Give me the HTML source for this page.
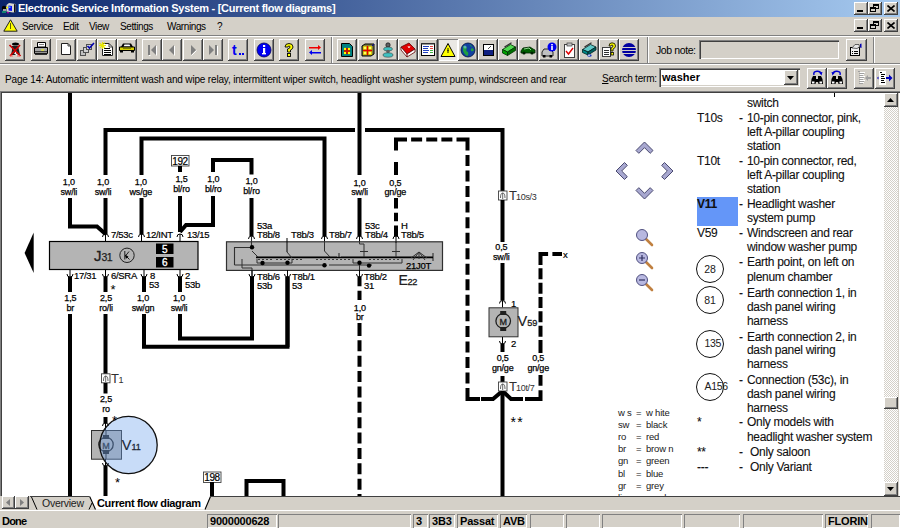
<!DOCTYPE html>
<html><head><meta charset="utf-8">
<style>
*{margin:0;padding:0;box-sizing:border-box}
html,body{width:900px;height:528px;overflow:hidden;-webkit-font-smoothing:antialiased;background:#D4D0C8;font-family:"Liberation Sans",sans-serif;color:#000}
.a{position:absolute}
#title{left:0;top:0;width:900px;height:17px;background:linear-gradient(to right,#0A246A,#A6CAF0)}
#title .t{left:18px;top:2px;color:#fff;font-weight:bold;font-size:11px;letter-spacing:-0.28px;white-space:nowrap}
.cb{width:14px;height:13px;background:#D4D0C8;box-shadow:inset -1px -1px #404040,inset 1px 1px #fff,inset -2px -2px #808080}
.menu{top:21px;font-size:10px;white-space:nowrap;letter-spacing:-0.4px}
.btn{width:20px;height:22px;background:#D4D0C8;box-shadow:inset -1px -1px #404040,inset 1px 1px #fff,inset -2px -2px #808080}
.btn svg{position:absolute;left:2px;top:3px}
.sunk{box-shadow:inset 1px 1px #808080,inset -1px -1px #fff}
.hl{left:0;width:900px;height:1px}
.sp{top:78px;font-size:10px;white-space:nowrap}
.lg{font-size:12px;white-space:nowrap;letter-spacing:-0.3px;color:#101010;-webkit-text-stroke:0.1px #101010}
.st{top:514px;height:14px;box-shadow:inset 1px 1px #808080,inset -1px -1px #fff;font-size:11px;font-weight:bold;padding:1px 0 0 3px;white-space:nowrap;letter-spacing:-0.2px}
</style></head><body>

<!-- title bar -->
<div id="title" class="a">
  <svg class="a" style="left:0;top:0" width="17" height="16" viewBox="0 0 17 16">
    <path d="M6.5 5 L9 3 L15.5 4 L15.5 12 L13 12.5 L6.5 11.5Z" fill="#D8D8D0"/>
    <path d="M14 4 L15.5 4.5 L15.5 12 L14 12.5Z" fill="#101010"/>
    <path d="M8.5 5.5 L12 6 L12 11 L8.5 10.5Z" fill="#1010F0"/>
    <rect x="9" y="6.5" width="1.5" height="1.5" fill="#40C0FF"/>
    <circle cx="4" cy="8" r="2.2" fill="#000"/>
    <rect x="3" y="9" width="3" height="2.5" fill="#A0A0A0"/>
    <rect x="6" y="6.8" width="2" height="1.5" fill="#F0F000"/>
    <rect x="2" y="11" width="4" height="2" fill="#108070"/>
    <rect x="7" y="12" width="2" height="1.3" fill="#A000A0"/>
  </svg>
  <div class="a t">Electronic Service Information System - [Current flow diagrams]</div>
  <div class="a cb" style="left:854px;top:2px"><div class="a" style="left:3px;top:8px;width:6px;height:2px;background:#000"></div></div>
  <div class="a cb" style="left:868px;top:2px"><div class="a" style="left:5px;top:2px;width:6px;height:5px;border:1px solid #000;border-top-width:2px"></div><div class="a" style="left:2px;top:5px;width:6px;height:5px;border:1px solid #000;border-top-width:2px;background:#D4D0C8"></div></div>
  <div class="a cb" style="left:884px;top:2px"><svg class="a" style="left:3px;top:3px" width="8" height="7"><path d="M0.5 0.5 L7.5 6.5 M7.5 0.5 L0.5 6.5" stroke="#000" stroke-width="1.6"/></svg></div>
</div>

<!-- menu bar -->
<svg class="a" style="left:3px;top:19px" width="15" height="13" viewBox="0 0 15 13"><path d="M7.5 0.8 L14.2 12.2 L0.8 12.2 Z" fill="#FFFF00" stroke="#202020" stroke-width="1"/><path d="M7 4 L8 4 L8 10 L7 10Z" fill="#606000"/></svg>
<div class="a menu" style="left:22px">Service</div>
<div class="a menu" style="left:63px">Edit</div>
<div class="a menu" style="left:89px">View</div>
<div class="a menu" style="left:120px">Settings</div>
<div class="a menu" style="left:167px">Warnings</div>
<div class="a menu" style="left:217px">?</div>
<div class="a cb" style="left:854px;top:19px"><div class="a" style="left:3px;top:8px;width:6px;height:2px;background:#000"></div></div>
<div class="a cb" style="left:868px;top:19px"><div class="a" style="left:5px;top:2px;width:6px;height:5px;border:1px solid #000;border-top-width:2px"></div><div class="a" style="left:2px;top:5px;width:6px;height:5px;border:1px solid #000;border-top-width:2px;background:#D4D0C8"></div></div>
<div class="a cb" style="left:884px;top:19px"><svg class="a" style="left:3px;top:3px" width="8" height="7"><path d="M0.5 0.5 L7.5 6.5 M7.5 0.5 L0.5 6.5" stroke="#000" stroke-width="1.6"/></svg></div>

<div class="a hl" style="top:35px;background:#808080"></div>
<div class="a hl" style="top:36px;background:#fff"></div>

<!-- TOOLBAR -->
<div class="a" style="left:5px;top:39px;width:20px;height:22px;background:#D4D0C8;box-shadow:inset -1px -1px #404040,inset 1px 1px #fff,inset -2px -2px #808080"><svg class="a" style="left:2px;top:3px" width="16" height="16" viewBox="0 0 16 16"><ellipse cx="8.5" cy="2" rx="3.5" ry="1.6" fill="#000"/><path d="M5 4 L11 4 L12 8 L13 13 L4 13 L5 8Z" fill="#202020"/><path d="M8 7 L10 10 L8 12" fill="#fff"/><path d="M7.5 11 L10.5 13" stroke="#fff" stroke-width="1.5"/><path d="M2.5 3 L13.5 14 M13 3 L3 14" stroke="#D00000" stroke-width="1.7"/><path d="M3 14 L6 14 M10 14 L13 14" stroke="#FF6060" stroke-width="1"/></svg></div>
<div class="a" style="left:31px;top:39px;width:20px;height:22px;background:#D4D0C8;box-shadow:inset -1px -1px #404040,inset 1px 1px #fff,inset -2px -2px #808080"><svg class="a" style="left:2px;top:3px" width="16" height="16" viewBox="0 0 16 16"><path d="M4.5 0.5 L12.5 0.5 L12.5 5 L4.5 5Z" fill="#fff" stroke="#000" stroke-width="1"/><path d="M6 2.5 H11" stroke="#808080"/><path d="M1.5 5.5 H14.5 V11.5 H1.5Z" fill="#A8A8A8" stroke="#000"/><rect x="2" y="9" width="12" height="1.2" fill="#404040"/><rect x="8" y="7.5" width="3" height="1" fill="#FFFF00"/><rect x="2" y="11.5" width="12" height="1.5" fill="#303030"/></svg></div>
<div class="a" style="left:56px;top:39px;width:20px;height:22px;background:#D4D0C8;box-shadow:inset -1px -1px #404040,inset 1px 1px #fff,inset -2px -2px #808080"><svg class="a" style="left:2px;top:3px" width="16" height="16" viewBox="0 0 16 16"><path d="M3.5 1.5 L10 1.5 L12.5 4 L12.5 12.5 L3.5 12.5Z" fill="#fff" stroke="#202020"/><path d="M10 1.5 L10 4 L12.5 4" fill="none" stroke="#404040"/></svg></div>
<div class="a" style="left:77px;top:39px;width:20px;height:22px;background:#D4D0C8;box-shadow:inset -1px -1px #404040,inset 1px 1px #fff,inset -2px -2px #808080"><svg class="a" style="left:2px;top:3px" width="16" height="16" viewBox="0 0 16 16"><rect x="1.5" y="8.5" width="5" height="5" fill="#C0C0C0" stroke="#505050"/><rect x="4.5" y="5.5" width="5" height="5" fill="#D0D0D0" stroke="#505050"/><rect x="7.5" y="2.5" width="5" height="5" fill="#D8D8D8" stroke="#505050"/><path d="M8.5 4 L10.5 6 L15 1" fill="none" stroke="#0000B0" stroke-width="1.6"/></svg></div>
<div class="a" style="left:97px;top:39px;width:20px;height:22px;background:#D4D0C8;box-shadow:inset -1px -1px #404040,inset 1px 1px #fff,inset -2px -2px #808080"><svg class="a" style="left:2px;top:3px" width="16" height="16" viewBox="0 0 16 16"><path d="M3.5 1.5 L10 1.5 L13.5 5 L13.5 13.5 L3.5 13.5Z" fill="#fff" stroke="#202020"/><path d="M10 1.5 V5 H13.5" fill="none" stroke="#404040"/><path d="M5 6.5h6M5 8.5h7M5 10.5h7M5 12.5h7" stroke="#000" stroke-width="1"/><path d="M0.5 1 L6 6 M6 0.5 L1 6 M3.5 0 V7 M0 3.5 H7" stroke="#E8E800" stroke-width="1.1"/></svg></div>
<div class="a" style="left:117px;top:39px;width:20px;height:22px;background:#D4D0C8;box-shadow:inset -1px -1px #404040,inset 1px 1px #fff,inset -2px -2px #808080"><svg class="a" style="left:2px;top:3px" width="16" height="16" viewBox="0 0 16 16"><path d="M2 5 L4 1.5 L12 1.5 L14 5Z" fill="#000"/><path d="M4.5 4.5 L5.5 2.5 L10.5 2.5 L11.5 4.5Z" fill="#fff"/><path d="M0.5 5 L15.5 5 L15.5 8.5 L0.5 8.5Z" fill="#D8D000" stroke="#000" stroke-width="1"/><rect x="1" y="8" width="3" height="2.5" fill="#000"/><rect x="12" y="8" width="3" height="2.5" fill="#000"/><rect x="4" y="6" width="8" height="1" fill="#808000"/></svg></div>
<div class="a" style="left:142px;top:39px;width:20px;height:22px;background:#D4D0C8;box-shadow:inset -1px -1px #404040,inset 1px 1px #fff,inset -2px -2px #808080"><svg class="a" style="left:2px;top:3px" width="16" height="16" viewBox="0 0 16 16"><rect x="4" y="3" width="2" height="10" fill="#808080"/><path d="M12 3 L7 8 L12 13Z" fill="#808080"/><path d="M12.5 4 L12.5 13.5 M5 13.5 L6.5 13.5" stroke="#fff"/></svg></div>
<div class="a" style="left:162px;top:39px;width:20px;height:22px;background:#D4D0C8;box-shadow:inset -1px -1px #404040,inset 1px 1px #fff,inset -2px -2px #808080"><svg class="a" style="left:2px;top:3px" width="16" height="16" viewBox="0 0 16 16"><path d="M10 3 L5 8 L10 13Z" fill="#808080"/><path d="M10.5 4 L10.5 13.5" stroke="#fff"/></svg></div>
<div class="a" style="left:183px;top:39px;width:20px;height:22px;background:#D4D0C8;box-shadow:inset -1px -1px #404040,inset 1px 1px #fff,inset -2px -2px #808080"><svg class="a" style="left:2px;top:3px" width="16" height="16" viewBox="0 0 16 16"><path d="M6 3 L11 8 L6 13Z" fill="#808080"/><path d="M6.5 13.5 L11.5 8.5" stroke="#fff"/></svg></div>
<div class="a" style="left:203px;top:39px;width:20px;height:22px;background:#D4D0C8;box-shadow:inset -1px -1px #404040,inset 1px 1px #fff,inset -2px -2px #808080"><svg class="a" style="left:2px;top:3px" width="16" height="16" viewBox="0 0 16 16"><path d="M4 3 L9 8 L4 13Z" fill="#808080"/><rect x="10" y="3" width="2" height="10" fill="#808080"/><path d="M12.5 4 L12.5 13.5" stroke="#fff"/></svg></div>
<div class="a" style="left:228px;top:39px;width:20px;height:22px;background:#D4D0C8;box-shadow:inset -1px -1px #404040,inset 1px 1px #fff,inset -2px -2px #808080"><svg class="a" style="left:2px;top:3px" width="16" height="16" viewBox="0 0 16 16"><text x="2" y="13" font-family="Liberation Sans" font-weight="bold" font-size="14" fill="#0000F0">t</text><rect x="9" y="11" width="2" height="2" fill="#0000F0"/><rect x="12" y="11" width="2" height="2" fill="#0000F0"/></svg></div>
<div class="a" style="left:254px;top:39px;width:20px;height:22px;background:#D4D0C8;box-shadow:inset -1px -1px #404040,inset 1px 1px #fff,inset -2px -2px #808080"><svg class="a" style="left:2px;top:3px" width="16" height="16" viewBox="0 0 16 16"><circle cx="8" cy="8" r="7" fill="#0000F0" stroke="#000060" stroke-width="0.8"/><rect x="7" y="3" width="2.2" height="2" fill="#fff"/><rect x="7" y="6" width="2.2" height="6" fill="#fff"/><rect x="6" y="11" width="4" height="1.4" fill="#fff"/></svg></div>
<div class="a" style="left:279px;top:39px;width:20px;height:22px;background:#D4D0C8;box-shadow:inset -1px -1px #404040,inset 1px 1px #fff,inset -2px -2px #808080"><svg class="a" style="left:2px;top:3px" width="16" height="16" viewBox="0 0 16 16"><path d="M4 5 Q4 1.5 8 1.5 Q12 1.5 12 5 Q12 7 9.5 8 L9.5 10 L6.5 10 L6.5 7 Q9 6.5 9 5 Q9 4 8 4 Q7 4 7 5Z" fill="#FFFF00" stroke="#000" stroke-width="0.9"/><rect x="6.5" y="11.5" width="3" height="3" fill="#FFFF00" stroke="#000" stroke-width="0.9"/></svg></div>
<div class="a" style="left:305px;top:39px;width:20px;height:22px;background:#D4D0C8;box-shadow:inset -1px -1px #404040,inset 1px 1px #fff,inset -2px -2px #808080"><svg class="a" style="left:2px;top:3px" width="16" height="16" viewBox="0 0 16 16"><path d="M2 5 L11 5 L11 3 L14 5.5 L11 8 L11 6.5 L2 6.5Z" fill="#F00000"/><path d="M14 10 L5 10 L5 8 L2 10.5 L5 13 L5 11.5 L14 11.5Z" fill="#0000F0"/></svg></div>
<div class="a" style="left:337px;top:39px;width:20px;height:22px;background:#D4D0C8;box-shadow:inset -1px -1px #404040,inset 1px 1px #fff,inset -2px -2px #808080"><svg class="a" style="left:2px;top:3px" width="16" height="16" viewBox="0 0 16 16"><path d="M2.5 1.5 L10.5 1.5 L13.5 4.5 L13.5 14.5 L2.5 14.5Z" fill="#008080" stroke="#000"/><rect x="5" y="6" width="6" height="6" fill="#804000"/><circle cx="6" cy="7" r="1.2" fill="#FFFF00"/><circle cx="10" cy="7" r="1.2" fill="#FFFF00"/><circle cx="6" cy="11" r="1.2" fill="#FFFF00"/><circle cx="10" cy="11" r="1.2" fill="#FFFF00"/><path d="M8 6 V12 M5 9 H11" stroke="#E00000" stroke-width="1.2"/></svg></div>
<div class="a" style="left:358px;top:39px;width:20px;height:22px;background:#D4D0C8;box-shadow:inset -1px -1px #404040,inset 1px 1px #fff,inset -2px -2px #808080"><svg class="a" style="left:2px;top:3px" width="16" height="16" viewBox="0 0 16 16"><path d="M2 4 L5 2 L14 2 L14 12 L11 14 L2 14Z" fill="#808040" stroke="#000"/><rect x="3" y="4" width="9" height="9" fill="#D0C000"/><path d="M7.5 4 V13 M3 8.5 H12" stroke="#E00000" stroke-width="1.4"/><circle cx="5" cy="6" r="1.3" fill="#FFFF60"/><circle cx="10" cy="6" r="1.3" fill="#FFFF60"/><circle cx="5" cy="11" r="1.3" fill="#FFFF60"/><circle cx="10" cy="11" r="1.3" fill="#FFFF60"/><path d="M12 4 L14 2" stroke="#0000A0"/></svg></div>
<div class="a" style="left:378px;top:39px;width:20px;height:22px;background:#D4D0C8;box-shadow:inset -1px -1px #404040,inset 1px 1px #fff,inset -2px -2px #808080"><svg class="a" style="left:2px;top:3px" width="16" height="16" viewBox="0 0 16 16"><circle cx="8" cy="3" r="2.2" fill="#606060" stroke="#000" stroke-width="0.6"/><ellipse cx="8" cy="7" rx="4.5" ry="2" fill="#40C0C0" stroke="#404040" stroke-width="0.6"/><circle cx="8" cy="9.5" r="1.8" fill="#606060"/><ellipse cx="8" cy="13" rx="5" ry="2.2" fill="#40C0C0" stroke="#404040" stroke-width="0.6"/></svg></div>
<div class="a" style="left:398px;top:39px;width:20px;height:22px;background:#D4D0C8;box-shadow:inset -1px -1px #404040,inset 1px 1px #fff,inset -2px -2px #808080"><svg class="a" style="left:2px;top:3px" width="16" height="16" viewBox="0 0 16 16"><path d="M1 5 L9 1 L15 7 L7 12Z" fill="#E00000" stroke="#600000" stroke-width="0.8"/><path d="M1 5 L1 8 L7 15 L15 10 L15 7 L7 12Z" fill="#fff" stroke="#600000" stroke-width="0.8"/><path d="M7 12 L7 15" stroke="#600000"/><path d="M8 4 L9 6 L10 4" stroke="#fff" fill="none" stroke-width="0.8"/></svg></div>
<div class="a" style="left:418px;top:39px;width:20px;height:22px;background:#D4D0C8;box-shadow:inset -1px -1px #404040,inset 1px 1px #fff,inset -2px -2px #808080"><svg class="a" style="left:2px;top:3px" width="16" height="16" viewBox="0 0 16 16"><rect x="1.5" y="1.5" width="13" height="12" fill="#fff" stroke="#000"/><rect x="1" y="1" width="14" height="1.5" fill="#303030"/><path d="M3 4.5h6M3 6.5h5M3 8.5h6M3 10.5h5" stroke="#2040C0" stroke-width="1"/><path d="M10 4.5h3M10 6.5h3" stroke="#E04040" stroke-width="1"/><path d="M10 8.5h3M10 10.5h3" stroke="#40B040" stroke-width="1"/></svg></div>
<div class="a" style="left:438px;top:39px;width:20px;height:22px;background:#EAE8E4;box-shadow:inset 1px 1px #808080,inset -1px -1px #fff"><svg class="a" style="left:2px;top:3px" width="16" height="16" viewBox="0 0 16 16"><path d="M8 1.5 L15 14.5 L1 14.5Z" fill="#FFFF00" stroke="#000" stroke-width="1"/><path d="M8 6 L8 11 M7 8.5 L9 8.5" stroke="#404000" stroke-width="1.2"/></svg></div>
<div class="a" style="left:458px;top:39px;width:20px;height:22px;background:#D4D0C8;box-shadow:inset -1px -1px #404040,inset 1px 1px #fff,inset -2px -2px #808080"><svg class="a" style="left:2px;top:3px" width="16" height="16" viewBox="0 0 16 16"><circle cx="8" cy="8" r="7" fill="#1040A0" stroke="#001040" stroke-width="0.8"/><path d="M3 4 Q6 3 7 6 Q5 9 8 10 Q9 13 7 14 Q4 12 3 9Z" fill="#20A040"/><path d="M9 2 Q12 3 12 6 Q10 7 11 9 Q13 10 14 8" fill="#20A040"/><circle cx="5" cy="5" r="1.5" fill="#80C0FF" opacity="0.6"/></svg></div>
<div class="a" style="left:478px;top:39px;width:20px;height:22px;background:#D4D0C8;box-shadow:inset -1px -1px #404040,inset 1px 1px #fff,inset -2px -2px #808080"><svg class="a" style="left:2px;top:3px" width="16" height="16" viewBox="0 0 16 16"><rect x="3.5" y="2.5" width="10" height="11" fill="#fff" stroke="#000"/><rect x="4" y="8" width="9" height="5" fill="#102080"/><path d="M8 7 L11 4" stroke="#404040" stroke-width="0.9"/></svg></div>
<div class="a" style="left:498px;top:39px;width:20px;height:22px;background:#D4D0C8;box-shadow:inset -1px -1px #404040,inset 1px 1px #fff,inset -2px -2px #808080"><svg class="a" style="left:2px;top:3px" width="16" height="16" viewBox="0 0 16 16"><path d="M2.5 7.5 L10.5 2.5 L15.5 5 L7.5 10Z" fill="#50D850" stroke="#003000" stroke-width="0.8"/><path d="M2.5 7.5 L7.5 10 L7.5 13.5 L2.5 11Z" fill="#00A000" stroke="#003000" stroke-width="0.8"/><path d="M7.5 10 L15.5 5 L15.5 8.5 L7.5 13.5Z" fill="#007000" stroke="#003000" stroke-width="0.8"/><path d="M4.5 5 L11.5 0.8" stroke="#303030" stroke-width="1.3"/></svg></div>
<div class="a" style="left:518px;top:39px;width:20px;height:22px;background:#D4D0C8;box-shadow:inset -1px -1px #404040,inset 1px 1px #fff,inset -2px -2px #808080"><svg class="a" style="left:2px;top:3px" width="16" height="16" viewBox="0 0 16 16"><path d="M1 9 L3 6 L10 5 L13 7 L15 8 L15 11 L1 11Z" fill="#006000" stroke="#002000" stroke-width="0.8"/><path d="M4 7 L9 6 L11 8" stroke="#90D090" fill="none"/><circle cx="4" cy="11" r="1.6" fill="#002000"/><circle cx="12" cy="11" r="1.6" fill="#002000"/></svg></div>
<div class="a" style="left:539px;top:39px;width:20px;height:22px;background:#D4D0C8;box-shadow:inset -1px -1px #404040,inset 1px 1px #fff,inset -2px -2px #808080"><svg class="a" style="left:2px;top:3px" width="16" height="16" viewBox="0 0 16 16"><path d="M1 10 L3 7 L9 7 L12 10 L12 14 L1 14Z" fill="#C0C0C0" stroke="#000" stroke-width="0.8"/><rect x="2" y="13" width="2.5" height="2.5" fill="#000"/><rect x="8.5" y="13" width="2.5" height="2.5" fill="#000"/><circle cx="11" cy="5" r="4.5" fill="#0000F0"/><rect x="10.2" y="2" width="1.6" height="1.4" fill="#fff"/><rect x="10.2" y="4" width="1.6" height="4" fill="#fff"/></svg></div>
<div class="a" style="left:559px;top:39px;width:20px;height:22px;background:#D4D0C8;box-shadow:inset -1px -1px #404040,inset 1px 1px #fff,inset -2px -2px #808080"><svg class="a" style="left:2px;top:3px" width="16" height="16" viewBox="0 0 16 16"><rect x="3.5" y="2.5" width="10" height="13" fill="#fff" stroke="#404040"/><rect x="6" y="1" width="5" height="3" fill="#C0C0C0" stroke="#404040" stroke-width="0.7"/><path d="M5 9 L7.5 12 L12 6" fill="none" stroke="#E00000" stroke-width="1.4"/></svg></div>
<div class="a" style="left:579px;top:39px;width:20px;height:22px;background:#D4D0C8;box-shadow:inset -1px -1px #404040,inset 1px 1px #fff,inset -2px -2px #808080"><svg class="a" style="left:2px;top:3px" width="16" height="16" viewBox="0 0 16 16"><path d="M1.5 7.5 L9.5 2.5 L15 5 L7 10Z" fill="#60C8C8" stroke="#002020" stroke-width="0.8"/><path d="M1.5 7.5 L7 10 L7 13 L1.5 10.5Z" fill="#008888" stroke="#002020" stroke-width="0.8"/><path d="M7 10 L15 5 L15 8 L7 13Z" fill="#006060" stroke="#002020" stroke-width="0.8"/><path d="M3.5 5 L10.5 0.8" stroke="#303030" stroke-width="1.3"/><ellipse cx="8.5" cy="13.5" rx="2.2" ry="1.3" fill="#2040C0"/><ellipse cx="8" cy="13.2" rx="1" ry="0.6" fill="#fff"/></svg></div>
<div class="a" style="left:599px;top:39px;width:20px;height:22px;background:#D4D0C8;box-shadow:inset -1px -1px #404040,inset 1px 1px #fff,inset -2px -2px #808080"><svg class="a" style="left:2px;top:3px" width="16" height="16" viewBox="0 0 16 16"><rect x="1.5" y="5.5" width="8" height="9" fill="#fff" stroke="#404040"/><path d="M3 8.5h5M3 10.5h5M3 12.5h5" stroke="#303030"/><path d="M8 4 Q8 0.8 11 0.8 Q14.5 0.8 14.5 4 Q14.5 6 12 7 L12 9 L10 9 L10 6 Q12 5.5 12 4 Q12 3 11 3 Q10 3 10 4Z" fill="#FFFF00" stroke="#000" stroke-width="0.8"/><rect x="10" y="10.5" width="2.5" height="2.5" fill="#FFFF00" stroke="#000" stroke-width="0.8"/></svg></div>
<div class="a" style="left:619px;top:39px;width:20px;height:22px;background:#D4D0C8;box-shadow:inset -1px -1px #404040,inset 1px 1px #fff,inset -2px -2px #808080"><svg class="a" style="left:2px;top:3px" width="16" height="16" viewBox="0 0 16 16"><circle cx="8" cy="8" r="7" fill="#0000A0"/><path d="M1 5.5 H15 M0.5 8.5 H15.5 M1 11.5 H15" stroke="#D4D0C8" stroke-width="1"/></svg></div>
<div class="a" style="left:331px;top:37px;width:1px;height:26px;background:#808080"></div><div class="a" style="left:332px;top:37px;width:1px;height:26px;background:#fff"></div>
<div class="a" style="left:647px;top:37px;width:1px;height:26px;background:#808080"></div><div class="a" style="left:648px;top:37px;width:1px;height:26px;background:#fff"></div>
<div class="a" style="left:873px;top:37px;width:1px;height:26px;background:#808080"></div><div class="a" style="left:874px;top:37px;width:1px;height:26px;background:#fff"></div>
<div class="a" style="left:656px;top:44px;font-size:10.5px;letter-spacing:-0.4px;white-space:nowrap">Job note:</div>
<div class="a" style="left:699px;top:40px;width:140px;height:19px;background:#D4D0C8;box-shadow:inset 1px 1px #808080,inset 2px 2px #404040,inset -1px -1px #fff,inset -2px -2px #D4D0C8"></div>
<div class="a" style="left:846px;top:39px;width:21px;height:22px;background:#D4D0C8;box-shadow:inset -1px -1px #404040,inset 1px 1px #fff,inset -2px -2px #808080"><svg class="a" style="left:2px;top:3px" width="16" height="16" viewBox="0 0 16 16"><rect x="2.5" y="5.5" width="9" height="8" fill="#F0F0F0" stroke="#000"/><path d="M4 9.5 H5 M6 9.5 H10 M4 11.5 H5 M6 11.5 H10" stroke="#000"/><path d="M4 6 L7 2.5 L11 2.5 L11.5 5 L9 6.5Z" fill="#E8E8E8" stroke="#404040" stroke-width="0.8"/><path d="M12 2 L13.5 1.5 L13.5 6 L12 5.5Z" fill="#0000B0"/></svg></div>
<div class="a" style="left:659px;top:68px;width:141px;height:19px;background:#fff;box-shadow:inset 1px 1px #808080,inset 2px 2px #404040,inset -1px -1px #fff,inset -2px -2px #D4D0C8"></div>
<div class="a" style="left:662px;top:70.5px;font-size:11px;font-weight:bold;letter-spacing:0px">washer</div>
<div class="a" style="left:784px;top:70px;width:14px;height:15px;background:#D4D0C8;box-shadow:inset -1px -1px #404040,inset 1px 1px #fff,inset -2px -2px #808080"><svg class="a" style="left:3px;top:6px" width="8" height="4"><path d="M0 0 L7 0 L3.5 4Z" fill="#000"/></svg></div>
<div class="a" style="left:807px;top:68px;width:20px;height:21px;background:#D4D0C8;box-shadow:inset -1px -1px #404040,inset 1px 1px #fff,inset -2px -2px #808080"><svg class="a" style="left:2px;top:2px" width="16" height="16" viewBox="0 0 16 16"><path d="M5 5 Q4 1.5 8 1.2 Q11.5 1 12 3.5" fill="none" stroke="#0000D0" stroke-width="1.5"/><path d="M10 2.5 L13.5 2 L12.5 5.5Z" fill="#0000D0"/><path d="M2.5 9 L4 6 L7 6 L7 9 L9 9 L9 6 L12 6 L13.5 9 L14 14 L9.5 14 L9 12 L7 12 L6.5 14 L2 14Z" fill="#000"/><rect x="3" y="11.5" width="2.5" height="2" fill="#fff"/><rect x="10.5" y="11.5" width="2.5" height="2" fill="#fff"/></svg></div>
<div class="a" style="left:827px;top:68px;width:20px;height:21px;background:#D4D0C8;box-shadow:inset -1px -1px #404040,inset 1px 1px #fff,inset -2px -2px #808080"><svg class="a" style="left:2px;top:2px" width="16" height="16" viewBox="0 0 16 16"><path d="M11 5 Q12 1.5 8 1.2 Q4.5 1 4 3.5" fill="none" stroke="#0000D0" stroke-width="1.5"/><path d="M6 2.5 L2.5 2 L3.5 5.5Z" fill="#0000D0"/><path d="M2.5 9 L4 6 L7 6 L7 9 L9 9 L9 6 L12 6 L13.5 9 L14 14 L9.5 14 L9 12 L7 12 L6.5 14 L2 14Z" fill="#000"/><rect x="3" y="11.5" width="2.5" height="2" fill="#fff"/><rect x="10.5" y="11.5" width="2.5" height="2" fill="#fff"/></svg></div>
<div class="a" style="left:854px;top:68px;width:20px;height:21px;background:#D4D0C8;box-shadow:inset -1px -1px #404040,inset 1px 1px #fff,inset -2px -2px #808080"><svg class="a" style="left:2px;top:2px" width="16" height="16" viewBox="0 0 16 16"><path d="M2 1.5 H4 M3 3.5 H8 M3 5.5 H7 M3 7.5 H8 M3 9.5 H7 M3 11.5 H8 M3 13.5 H7" stroke="#A0A0A0" stroke-width="1"/><path d="M4 2.5 H9 M4 4.5 H8 M4 6.5 H9 M4 8.5 H8 M4 10.5 H9 M4 12.5 H8" stroke="#FFFFFF" stroke-width="1"/><path d="M9 8 L12 5 L12 7 L15 7 L15 9 L12 9 L12 11Z" fill="#A0A0A0"/></svg></div>
<div class="a" style="left:875px;top:68px;width:20px;height:21px;background:#D4D0C8;box-shadow:inset -1px -1px #404040,inset 1px 1px #fff,inset -2px -2px #808080"><svg class="a" style="left:2px;top:2px" width="16" height="16" viewBox="0 0 16 16"><rect x="2" y="1" width="7" height="14" fill="#fff"/><path d="M3 2.5 H5 M4 4.5 H8 M4 6.5 H7 M4 8.5 H8 M4 10.5 H7 M4 12.5 H8" stroke="#000" stroke-width="1"/><path d="M0 8 L1.5 6.5 L1.5 9.5Z" fill="#0000C0"/><path d="M15.5 8 L12 4.5 L12 7 L9 7 L9 9 L12 9 L12 11.5Z" fill="#0000C0"/></svg></div>

<div class="a hl" style="top:63px;background:#808080"></div>
<div class="a hl" style="top:64px;background:#fff"></div>

<!-- page bar -->
<div class="a sp" style="left:5px;top:73.5px;letter-spacing:-0.17px">Page 14: Automatic intermittent wash and wipe relay, intermittent wiper switch, headlight washer system pump, windscreen and rear</div>
<div class="a sp" style="left:602px;top:73px;letter-spacing:-0.2px"><u>S</u>earch term:</div>

<!-- CONTENT -->
<div class="a" style="left:0;top:91px;width:900px;height:406px;background:#fff;box-shadow:inset 1px 1px #808080,inset 2px 2px #404040,inset -1px 0 #fff,inset -2px 0 #D4D0C8"></div>

<svg class="a" style="left:0;top:0" width="900" height="528" viewBox="0 0 900 528"><defs><clipPath id="cc"><rect x="2" y="93" width="882" height="404"/></clipPath></defs><g clip-path="url(#cc)"><path d="M70 92 V175" fill="none" stroke="#000" stroke-width="4" stroke-linecap="butt" stroke-linejoin="miter"/>
<text x="68.8" y="185.10000000000002" font-family="Liberation Sans" font-size="9" font-weight="normal" text-anchor="middle" letter-spacing="-0.2" fill="#000" stroke="#000" stroke-width="0.25">1,0</text>
<text x="68.8" y="194.60000000000002" font-family="Liberation Sans" font-size="9" font-weight="normal" text-anchor="middle" letter-spacing="-0.2" fill="#000" stroke="#000" stroke-width="0.25">sw/li</text>
<path d="M70 198 V226.5 H97 L105.5 234" fill="none" stroke="#000" stroke-width="4" stroke-linecap="butt" stroke-linejoin="miter"/>
<path d="M105.5 175 V130 H355" fill="none" stroke="#000" stroke-width="4" stroke-linecap="butt" stroke-linejoin="miter"/>
<path d="M365 130 H502.5 V191" fill="none" stroke="#000" stroke-width="4" stroke-linecap="butt" stroke-linejoin="miter"/>
<text x="103.0" y="185.10000000000002" font-family="Liberation Sans" font-size="9" font-weight="normal" text-anchor="middle" letter-spacing="-0.2" fill="#000" stroke="#000" stroke-width="0.25">1,0</text>
<text x="103.0" y="194.60000000000002" font-family="Liberation Sans" font-size="9" font-weight="normal" text-anchor="middle" letter-spacing="-0.2" fill="#000" stroke="#000" stroke-width="0.25">sw/li</text>
<path d="M105.5 198 V234" fill="none" stroke="#000" stroke-width="4" stroke-linecap="butt" stroke-linejoin="miter"/>
<path d="M141.5 175 V138.5 H324.5 V236" fill="none" stroke="#000" stroke-width="4" stroke-linecap="butt" stroke-linejoin="miter"/>
<text x="140.8" y="185.10000000000002" font-family="Liberation Sans" font-size="9" font-weight="normal" text-anchor="middle" letter-spacing="-0.2" fill="#000" stroke="#000" stroke-width="0.25">1,0</text>
<text x="140.8" y="194.60000000000002" font-family="Liberation Sans" font-size="9" font-weight="normal" text-anchor="middle" letter-spacing="-0.2" fill="#000" stroke="#000" stroke-width="0.25">ws/ge</text>
<path d="M141.5 198 V234" fill="none" stroke="#000" stroke-width="4" stroke-linecap="butt" stroke-linejoin="miter"/>
<rect x="171.5" y="155.5" width="17.5" height="10.5" fill="#fff" stroke="#404040" stroke-width="0.9"/>
<text x="180" y="164.5" font-family="Liberation Sans" font-size="10" font-weight="normal" text-anchor="middle" letter-spacing="-0.4" fill="#000" stroke="#000" stroke-width="0.2">192</text>
<path d="M180 166 V172" fill="none" stroke="#000" stroke-width="4" stroke-linecap="butt" stroke-linejoin="miter"/>
<text x="181.5" y="182.3" font-family="Liberation Sans" font-size="9" font-weight="normal" text-anchor="middle" letter-spacing="-0.2" fill="#000" stroke="#000" stroke-width="0.25">1,5</text>
<text x="181.5" y="191.8" font-family="Liberation Sans" font-size="9" font-weight="normal" text-anchor="middle" letter-spacing="-0.2" fill="#000" stroke="#000" stroke-width="0.25">bl/ro</text>
<path d="M180 196 V232" fill="none" stroke="#000" stroke-width="4" stroke-linecap="butt" stroke-linejoin="miter"/>
<path d="M213 172 V160 H251.5 V174.5" fill="none" stroke="#000" stroke-width="4" stroke-linecap="butt" stroke-linejoin="miter"/>
<text x="213.3" y="182.3" font-family="Liberation Sans" font-size="9" font-weight="normal" text-anchor="middle" letter-spacing="-0.2" fill="#000" stroke="#000" stroke-width="0.25">1,0</text>
<text x="213.3" y="191.8" font-family="Liberation Sans" font-size="9" font-weight="normal" text-anchor="middle" letter-spacing="-0.2" fill="#000" stroke="#000" stroke-width="0.25">bl/ro</text>
<text x="251.5" y="184.3" font-family="Liberation Sans" font-size="9" font-weight="normal" text-anchor="middle" letter-spacing="-0.2" fill="#000" stroke="#000" stroke-width="0.25">1,0</text>
<text x="251.5" y="193.8" font-family="Liberation Sans" font-size="9" font-weight="normal" text-anchor="middle" letter-spacing="-0.2" fill="#000" stroke="#000" stroke-width="0.25">bl/ro</text>
<path d="M213 196 V225 H186 L180 232" fill="none" stroke="#000" stroke-width="4" stroke-linecap="butt" stroke-linejoin="miter"/>
<path d="M251.5 198 V236" fill="none" stroke="#000" stroke-width="4" stroke-linecap="butt" stroke-linejoin="miter"/>
<path d="M359.5 92 V175" fill="none" stroke="#000" stroke-width="4" stroke-linecap="butt" stroke-linejoin="miter"/>
<text x="359.5" y="185.5" font-family="Liberation Sans" font-size="9" font-weight="normal" text-anchor="middle" letter-spacing="-0.2" fill="#000" stroke="#000" stroke-width="0.25">1,0</text>
<text x="359.5" y="195.0" font-family="Liberation Sans" font-size="9" font-weight="normal" text-anchor="middle" letter-spacing="-0.2" fill="#000" stroke="#000" stroke-width="0.25">sw/li</text>
<path d="M359.5 198 V236" fill="none" stroke="#000" stroke-width="4" stroke-linecap="butt" stroke-linejoin="miter"/>
<path d="M396.00 175.00 L396.00 162.00 M396.00 150.50 L396.00 137.50 M394.00 139.50 L407.00 139.50 M411.12 139.50 L422.12 139.50 M426.25 139.50 L437.25 139.50 M441.38 139.50 L452.38 139.50 M456.50 139.50 L469.50 139.50 M467.50 137.50 L467.50 150.50 M467.50 155.03 L467.50 166.03 M467.50 170.56 L467.50 181.56 M467.50 186.09 L467.50 197.09 M467.50 201.62 L467.50 212.62 M467.50 217.16 L467.50 228.16 M467.50 232.69 L467.50 243.69 M467.50 248.22 L467.50 259.22 M467.50 263.75 L467.50 274.75 M467.50 279.28 L467.50 290.28 M467.50 294.81 L467.50 305.81 M467.50 310.34 L467.50 321.34 M467.50 325.88 L467.50 336.88 M467.50 341.41 L467.50 352.41 M467.50 356.94 L467.50 367.94 M467.50 372.47 L467.50 383.47 M467.50 388.00 L467.50 401.00 M465.50 399.00 L480.00 399.00" fill="none" stroke="#000" stroke-width="4" stroke-linecap="butt"/>
<path d="M481 399 H493 L502.5 391 L511 399 H523" fill="none" stroke="#000" stroke-width="4" stroke-linecap="butt" stroke-linejoin="miter"/>
<path d="M525.00 399.00 L542.50 399.00 M540.50 401.00 L540.50 390.15 M540.50 385.85 L540.50 375.00" fill="none" stroke="#000" stroke-width="4" stroke-linecap="butt"/>
<text x="395.3" y="185.5" font-family="Liberation Sans" font-size="9" font-weight="normal" text-anchor="middle" letter-spacing="-0.2" fill="#000" stroke="#000" stroke-width="0.25">0,5</text>
<text x="395.3" y="195.0" font-family="Liberation Sans" font-size="9" font-weight="normal" text-anchor="middle" letter-spacing="-0.2" fill="#000" stroke="#000" stroke-width="0.25">gn/ge</text>
<path d="M396.00 198.00 L396.00 208.47 M396.00 212.77 L396.00 221.23 M396.00 225.53 L396.00 236.00" fill="none" stroke="#000" stroke-width="4" stroke-linecap="butt"/>
<polygon points="33.7,232.4 24.6,253 33.7,273" fill="#000"/>
<rect x="49.5" y="241.5" width="148.5" height="28" fill="#B4B4B4" stroke="#000" stroke-width="1.2"/>
<path d="M102.5 237 Q102.5 234 105.5 234 Q108.5 234 108.5 237" fill="none" stroke="#000" stroke-width="1"/>
<path d="M105.5 234 V241" stroke="#000" stroke-width="1"/>
<path d="M138.5 237 Q138.5 234 141.5 234 Q144.5 234 144.5 237" fill="none" stroke="#000" stroke-width="1"/>
<path d="M141.5 234 V241" stroke="#000" stroke-width="1"/>
<path d="M177 237 Q177 234 180 234 Q183 234 183 237" fill="none" stroke="#000" stroke-width="1"/>
<path d="M180 234 V241" stroke="#000" stroke-width="1"/>
<text x="111" y="238" font-family="Liberation Sans" font-size="9.5" font-weight="normal" text-anchor="start" letter-spacing="-0.3" fill="#000" stroke="#000" stroke-width="0.2">7/53c</text>
<text x="146" y="238" font-family="Liberation Sans" font-size="9.5" font-weight="normal" text-anchor="start" letter-spacing="-0.3" fill="#000" stroke="#000" stroke-width="0.2">12/INT</text>
<text x="187" y="238" font-family="Liberation Sans" font-size="9.5" font-weight="normal" text-anchor="start" letter-spacing="-0.3" fill="#000" stroke="#000" stroke-width="0.2">13/15</text>
<text x="94" y="261" font-family="Liberation Sans" font-size="15" font-weight="normal" text-anchor="start" letter-spacing="0" fill="#202020" stroke="#202020" stroke-width="0.3">J</text>
<text x="101.5" y="261" font-family="Liberation Sans" font-size="10.5" font-weight="normal" text-anchor="start" letter-spacing="-0.6" fill="#202020" stroke="#202020" stroke-width="0.25">31</text>
<circle cx="127" cy="255.3" r="7.2" fill="none" stroke="#202020" stroke-width="1"/>
<path d="M124.8 251 V259.5 M125 256.5 L129 251.5 M125.5 255.5 L129.5 259.5" stroke="#202020" stroke-width="1" fill="none"/><path d="M125 254.5 L128.5 256.8 L126 258.8Z" fill="#000"/>
<rect x="156" y="243.5" width="17.5" height="10.5" fill="#000"/>
<rect x="156" y="257" width="17.5" height="10.5" fill="#000"/>
<text x="164.7" y="252.5" font-family="Liberation Sans" font-size="10" font-weight="normal" text-anchor="middle" letter-spacing="0" fill="#fff" stroke="#fff" stroke-width="0.35">5</text>
<text x="164.7" y="266" font-family="Liberation Sans" font-size="10" font-weight="normal" text-anchor="middle" letter-spacing="0" fill="#fff" stroke="#fff" stroke-width="0.35">6</text>
<path d="M70 270 V278" stroke="#000" stroke-width="1"/>
<path d="M67 274 Q67 277 70 277 Q73 277 73 274" fill="none" stroke="#000" stroke-width="1"/>
<path d="M70 277 V292" fill="none" stroke="#000" stroke-width="4" stroke-linecap="butt" stroke-linejoin="miter"/>
<path d="M105.5 270 V278" stroke="#000" stroke-width="1"/>
<path d="M102.5 274 Q102.5 277 105.5 277 Q108.5 277 108.5 274" fill="none" stroke="#000" stroke-width="1"/>
<path d="M105.5 277 V292" fill="none" stroke="#000" stroke-width="4" stroke-linecap="butt" stroke-linejoin="miter"/>
<path d="M144 270 V278" stroke="#000" stroke-width="1"/>
<path d="M141 274 Q141 277 144 277 Q147 277 147 274" fill="none" stroke="#000" stroke-width="1"/>
<path d="M144 277 V292" fill="none" stroke="#000" stroke-width="4" stroke-linecap="butt" stroke-linejoin="miter"/>
<path d="M180 270 V278" stroke="#000" stroke-width="1"/>
<path d="M177 274 Q177 277 180 277 Q183 277 183 274" fill="none" stroke="#000" stroke-width="1"/>
<path d="M180 277 V292" fill="none" stroke="#000" stroke-width="4" stroke-linecap="butt" stroke-linejoin="miter"/>
<text x="74" y="279" font-family="Liberation Sans" font-size="9.5" font-weight="normal" text-anchor="start" letter-spacing="-0.3" fill="#000" stroke="#000" stroke-width="0.2">17/31</text>
<text x="111" y="279" font-family="Liberation Sans" font-size="9.5" font-weight="normal" text-anchor="start" letter-spacing="-0.3" fill="#000" stroke="#000" stroke-width="0.2">6/SRA</text>
<text x="110.5" y="294" font-family="Liberation Sans" font-size="13" font-weight="normal" text-anchor="start" letter-spacing="0" fill="#000">*</text>
<text x="150" y="279" font-family="Liberation Sans" font-size="9.5" font-weight="normal" text-anchor="start" letter-spacing="-0.3" fill="#000" stroke="#000" stroke-width="0.2">8</text>
<text x="149" y="287.5" font-family="Liberation Sans" font-size="9.5" font-weight="normal" text-anchor="start" letter-spacing="-0.3" fill="#000" stroke="#000" stroke-width="0.2">53</text>
<text x="185" y="279" font-family="Liberation Sans" font-size="9.5" font-weight="normal" text-anchor="start" letter-spacing="-0.3" fill="#000" stroke="#000" stroke-width="0.2">2</text>
<text x="185" y="287.5" font-family="Liberation Sans" font-size="9.5" font-weight="normal" text-anchor="start" letter-spacing="-0.3" fill="#000" stroke="#000" stroke-width="0.2">53b</text>
<text x="70.3" y="301.3" font-family="Liberation Sans" font-size="9" font-weight="normal" text-anchor="middle" letter-spacing="-0.2" fill="#000" stroke="#000" stroke-width="0.25">1,5</text>
<text x="70.3" y="310.8" font-family="Liberation Sans" font-size="9" font-weight="normal" text-anchor="middle" letter-spacing="-0.2" fill="#000" stroke="#000" stroke-width="0.25">br</text>
<text x="106.0" y="301.3" font-family="Liberation Sans" font-size="9" font-weight="normal" text-anchor="middle" letter-spacing="-0.2" fill="#000" stroke="#000" stroke-width="0.25">2,5</text>
<text x="106.0" y="310.8" font-family="Liberation Sans" font-size="9" font-weight="normal" text-anchor="middle" letter-spacing="-0.2" fill="#000" stroke="#000" stroke-width="0.25">ro/li</text>
<text x="143.0" y="301.3" font-family="Liberation Sans" font-size="9" font-weight="normal" text-anchor="middle" letter-spacing="-0.2" fill="#000" stroke="#000" stroke-width="0.25">1,0</text>
<text x="143.0" y="310.8" font-family="Liberation Sans" font-size="9" font-weight="normal" text-anchor="middle" letter-spacing="-0.2" fill="#000" stroke="#000" stroke-width="0.25">sw/gn</text>
<text x="179.0" y="301.3" font-family="Liberation Sans" font-size="9" font-weight="normal" text-anchor="middle" letter-spacing="-0.2" fill="#000" stroke="#000" stroke-width="0.25">1,0</text>
<text x="179.0" y="310.8" font-family="Liberation Sans" font-size="9" font-weight="normal" text-anchor="middle" letter-spacing="-0.2" fill="#000" stroke="#000" stroke-width="0.25">sw/li</text>
<path d="M70 314 V497" fill="none" stroke="#000" stroke-width="4" stroke-linecap="butt" stroke-linejoin="miter"/>
<path d="M105.5 314 V374" fill="none" stroke="#000" stroke-width="4" stroke-linecap="butt" stroke-linejoin="miter"/>
<path d="M144 314 V346.8 H287.5 V277" fill="none" stroke="#000" stroke-width="4" stroke-linecap="butt" stroke-linejoin="miter"/>
<path d="M180 314 V338.6 H252 V277" fill="none" stroke="#000" stroke-width="4" stroke-linecap="butt" stroke-linejoin="miter"/>
<rect x="101.5" y="373.8" width="8.5" height="9" fill="#fff" stroke="#404040" stroke-width="0.9"/>
<path d="M103.5 381 Q103.5 376 105.7 376 Q108 376 108 381 M105.7 376 V382" stroke="#404040" stroke-width="0.8" fill="none"/>
<text x="111" y="383" font-family="Liberation Sans" font-size="13" font-weight="normal" text-anchor="start" letter-spacing="0" fill="#303030">T</text>
<text x="118.5" y="383" font-family="Liberation Sans" font-size="9" font-weight="normal" text-anchor="start" letter-spacing="0" fill="#303030">1</text>
<path d="M105.5 383 V393.5" fill="none" stroke="#000" stroke-width="4" stroke-linecap="butt" stroke-linejoin="miter"/>
<text x="106.0" y="402.3" font-family="Liberation Sans" font-size="9" font-weight="normal" text-anchor="middle" letter-spacing="-0.2" fill="#000" stroke="#000" stroke-width="0.25">2,5</text>
<text x="106.0" y="411.8" font-family="Liberation Sans" font-size="9" font-weight="normal" text-anchor="middle" letter-spacing="-0.2" fill="#000" stroke="#000" stroke-width="0.25">ro</text>
<path d="M105.5 417 V423" fill="none" stroke="#000" stroke-width="4" stroke-linecap="butt" stroke-linejoin="miter"/>
<rect x="91.5" y="430.5" width="30" height="28.7" fill="#B4B4B4" stroke="#303030" stroke-width="1"/>
<circle cx="106" cy="444.5" r="7.2" fill="none" stroke="#202020" stroke-width="1.3"/>
<rect x="103" y="435" width="6" height="4" fill="#202020"/><rect x="103" y="450" width="6" height="4" fill="#202020"/>
<path d="M106 430.5 V435 M106 454 V459" stroke="#202020" stroke-width="1"/>
<text x="106" y="448.5" font-family="Liberation Sans" font-size="9" font-weight="normal" text-anchor="middle" letter-spacing="0" fill="#202020" stroke="#202020" stroke-width="0.3">M</text>
<path d="M102.5 426 Q102.5 423 105.5 423 Q108.5 423 108.5 426" fill="none" stroke="#000" stroke-width="1"/>
<path d="M105.5 423 V430" stroke="#000" stroke-width="1"/>
<path d="M105.5 459 V467" stroke="#000" stroke-width="1"/>
<path d="M102.5 463 Q102.5 466 105.5 466 Q108.5 466 108.5 463" fill="none" stroke="#000" stroke-width="1"/>
<path d="M105.5 466 V497" fill="none" stroke="#000" stroke-width="4" stroke-linecap="butt" stroke-linejoin="miter"/>
<circle cx="128.5" cy="445" r="28.7" fill="rgba(110,163,237,0.38)" stroke="#101010" stroke-width="1.3"/>
<text x="121.8" y="449.8" font-family="Liberation Sans" font-size="14.5" font-weight="normal" text-anchor="start" letter-spacing="0" fill="#202838" stroke="#202838" stroke-width="0.15">V</text>
<text x="131.5" y="449.8" font-family="Liberation Sans" font-size="9" font-weight="normal" text-anchor="start" letter-spacing="-0.2" fill="#202838" stroke="#202838" stroke-width="0.3">11</text>
<text x="112" y="425" font-family="Liberation Sans" font-size="13" font-weight="normal" text-anchor="start" letter-spacing="0" fill="#000">*</text>
<text x="115" y="487" font-family="Liberation Sans" font-size="13" font-weight="normal" text-anchor="start" letter-spacing="0" fill="#000">*</text>
<rect x="226.5" y="241.8" width="216" height="28.6" fill="#B4B4B4" stroke="#303030" stroke-width="1.2"/>
<path d="M248.5 239 Q248.5 236 251.5 236 Q254.5 236 254.5 239" fill="none" stroke="#000" stroke-width="1"/>
<path d="M251.5 236 V243" stroke="#000" stroke-width="1"/>
<path d="M321.5 239 Q321.5 236 324.5 236 Q327.5 236 327.5 239" fill="none" stroke="#000" stroke-width="1"/>
<path d="M324.5 236 V243" stroke="#000" stroke-width="1"/>
<path d="M356.5 239 Q356.5 236 359.5 236 Q362.5 236 362.5 239" fill="none" stroke="#000" stroke-width="1"/>
<path d="M359.5 236 V243" stroke="#000" stroke-width="1"/>
<path d="M393 239 Q393 236 396 236 Q399 236 399 239" fill="none" stroke="#000" stroke-width="1"/>
<path d="M396 236 V243" stroke="#000" stroke-width="1"/>
<path d="M287 238 V252" stroke="#000" stroke-width="1"/>
<text x="257" y="229" font-family="Liberation Sans" font-size="9.5" font-weight="normal" text-anchor="start" letter-spacing="-0.3" fill="#000" stroke="#000" stroke-width="0.2">53a</text>
<text x="257" y="238" font-family="Liberation Sans" font-size="9.5" font-weight="normal" text-anchor="start" letter-spacing="-0.3" fill="#000" stroke="#000" stroke-width="0.2">T8b/8</text>
<text x="291" y="238" font-family="Liberation Sans" font-size="9.5" font-weight="normal" text-anchor="start" letter-spacing="-0.3" fill="#000" stroke="#000" stroke-width="0.2">T8b/3</text>
<text x="329" y="238" font-family="Liberation Sans" font-size="9.5" font-weight="normal" text-anchor="start" letter-spacing="-0.3" fill="#000" stroke="#000" stroke-width="0.2">T8b/7</text>
<text x="365" y="229" font-family="Liberation Sans" font-size="9.5" font-weight="normal" text-anchor="start" letter-spacing="-0.3" fill="#000" stroke="#000" stroke-width="0.2">53c</text>
<text x="365" y="238" font-family="Liberation Sans" font-size="9.5" font-weight="normal" text-anchor="start" letter-spacing="-0.3" fill="#000" stroke="#000" stroke-width="0.2">T8b/4</text>
<text x="401" y="229" font-family="Liberation Sans" font-size="9.5" font-weight="normal" text-anchor="start" letter-spacing="-0.3" fill="#000" stroke="#000" stroke-width="0.2">H</text>
<text x="401" y="238" font-family="Liberation Sans" font-size="9.5" font-weight="normal" text-anchor="start" letter-spacing="-0.3" fill="#000" stroke="#000" stroke-width="0.2">T8b/5</text>
<path d="M234.5 265 V247.5 H251.5 M251.5 236 V247.5 M256 257 H337 M341 257 H433 M339 253 V257 M433 253 V261" stroke="#303030" stroke-width="1.1" fill="none"/>
<path d="M256 257.5 H433" stroke="#000" stroke-width="1.5"/>
<path d="M252 251 L258 257 M287 252 L292 258 M324.5 241 V251 L330 257 M359.5 241 V244 H364 V257 M396 241 V257 M360 251.5 H368 M392 251.5 H400" stroke="#303030" stroke-width="1" fill="none"/>
<path d="M234.5 265 H324.5 M252 277 V268 H242 V259 M257 259 V263 H292 V259 M353 259 V263 H402 V259 M329 265 H372 M359.5 263 V277" stroke="#303030" stroke-width="1" fill="none"/>
<path d="M258 259.5 H272 M276 259.5 H302 M316 259.5 H352 M369 259.5 H401" stroke="#303030" stroke-width="0.9" stroke-dasharray="2 2" fill="none"/>
<circle cx="252" cy="247.3" r="2.2" fill="#000"/>
<circle cx="262.5" cy="263" r="2.2" fill="#000"/>
<circle cx="287.5" cy="262.8" r="2.2" fill="#000"/>
<circle cx="324.5" cy="265.3" r="2.2" fill="#000"/>
<circle cx="359.5" cy="262.8" r="2.2" fill="#000"/>
<circle cx="369" cy="265.6" r="2.2" fill="#000"/>
<path d="M411 258 L419 252 L427 258 M413 260 L419 252 L425 260 M419 252 V259" stroke="#303030" stroke-width="1" fill="none"/>
<text x="406" y="269" font-family="Liberation Sans" font-size="9.5" font-weight="normal" text-anchor="start" letter-spacing="-0.3" fill="#000" stroke="#000" stroke-width="0.25">21J0T</text>
<path d="M252 270 V278" stroke="#000" stroke-width="1"/>
<path d="M249 274 Q249 277 252 277 Q255 277 255 274" fill="none" stroke="#000" stroke-width="1"/>
<path d="M287.5 270 V278" stroke="#000" stroke-width="1"/>
<path d="M284.5 274 Q284.5 277 287.5 277 Q290.5 277 290.5 274" fill="none" stroke="#000" stroke-width="1"/>
<path d="M252 277 V338.6" fill="none" stroke="#000" stroke-width="4" stroke-linecap="butt" stroke-linejoin="miter"/>
<path d="M287.5 277 V347" fill="none" stroke="#000" stroke-width="4" stroke-linecap="butt" stroke-linejoin="miter"/>
<path d="M359.5 270 V278" stroke="#000" stroke-width="1"/>
<path d="M356.5 274 Q356.5 277 359.5 277 Q362.5 277 362.5 274" fill="none" stroke="#000" stroke-width="1"/>
<text x="257" y="280" font-family="Liberation Sans" font-size="9.5" font-weight="normal" text-anchor="start" letter-spacing="-0.3" fill="#000" stroke="#000" stroke-width="0.2">T8b/6</text>
<text x="257" y="288.5" font-family="Liberation Sans" font-size="9.5" font-weight="normal" text-anchor="start" letter-spacing="-0.3" fill="#000" stroke="#000" stroke-width="0.2">53b</text>
<text x="292" y="280" font-family="Liberation Sans" font-size="9.5" font-weight="normal" text-anchor="start" letter-spacing="-0.3" fill="#000" stroke="#000" stroke-width="0.2">T8b/1</text>
<text x="292" y="288.5" font-family="Liberation Sans" font-size="9.5" font-weight="normal" text-anchor="start" letter-spacing="-0.3" fill="#000" stroke="#000" stroke-width="0.2">53</text>
<text x="364" y="280" font-family="Liberation Sans" font-size="9.5" font-weight="normal" text-anchor="start" letter-spacing="-0.3" fill="#000" stroke="#000" stroke-width="0.2">T8b/2</text>
<text x="364" y="288.5" font-family="Liberation Sans" font-size="9.5" font-weight="normal" text-anchor="start" letter-spacing="-0.3" fill="#000" stroke="#000" stroke-width="0.2">31</text>
<text x="398.5" y="285" font-family="Liberation Sans" font-size="14" font-weight="normal" text-anchor="start" letter-spacing="0" fill="#202020" stroke="#202020" stroke-width="0.2">E</text>
<text x="407.5" y="285" font-family="Liberation Sans" font-size="9.2" font-weight="normal" text-anchor="start" letter-spacing="-0.3" fill="#202020" stroke="#202020" stroke-width="0.3">22</text>
<path d="M359.50 277.00 L359.50 286.35 M359.50 290.65 L359.50 300.00" fill="none" stroke="#000" stroke-width="4" stroke-linecap="butt"/>
<text x="359.8" y="310.90000000000003" font-family="Liberation Sans" font-size="9" font-weight="normal" text-anchor="middle" letter-spacing="-0.2" fill="#000" stroke="#000" stroke-width="0.25">1,0</text>
<text x="359.8" y="320.40000000000003" font-family="Liberation Sans" font-size="9" font-weight="normal" text-anchor="middle" letter-spacing="-0.2" fill="#000" stroke="#000" stroke-width="0.25">br</text>
<path d="M359.50 323.00 L359.50 336.00 M359.50 340.36 L359.50 351.36 M359.50 355.73 L359.50 366.73 M359.50 371.09 L359.50 382.09 M359.50 386.45 L359.50 397.45 M359.50 401.82 L359.50 412.82 M359.50 417.18 L359.50 428.18 M359.50 432.55 L359.50 443.55 M359.50 447.91 L359.50 458.91 M359.50 463.27 L359.50 474.27 M359.50 478.64 L359.50 489.64 M359.50 494.00 L359.50 507.00" fill="none" stroke="#000" stroke-width="4" stroke-linecap="butt"/>
<rect x="498.5" y="191" width="8.5" height="9" fill="#fff" stroke="#404040" stroke-width="0.9"/>
<path d="M500.5 198 Q500.5 193 502.7 193 Q505 193 505 198 M502.7 193 V199" stroke="#404040" stroke-width="0.8" fill="none"/>
<text x="509" y="200" font-family="Liberation Sans" font-size="13" font-weight="normal" text-anchor="start" letter-spacing="0" fill="#303030">T</text>
<text x="516" y="200" font-family="Liberation Sans" font-size="9" font-weight="normal" text-anchor="start" letter-spacing="-0.3" fill="#303030">10s/3</text>
<path d="M502.5 200 V242" fill="none" stroke="#000" stroke-width="4" stroke-linecap="butt" stroke-linejoin="miter"/>
<text x="501.3" y="250.3" font-family="Liberation Sans" font-size="9" font-weight="normal" text-anchor="middle" letter-spacing="-0.2" fill="#000" stroke="#000" stroke-width="0.25">0,5</text>
<text x="501.3" y="259.8" font-family="Liberation Sans" font-size="9" font-weight="normal" text-anchor="middle" letter-spacing="-0.2" fill="#000" stroke="#000" stroke-width="0.25">sw/li</text>
<path d="M502.5 263 V300.5" fill="none" stroke="#000" stroke-width="4" stroke-linecap="butt" stroke-linejoin="miter"/>
<path d="M499.5 303.5 Q499.5 300.5 502.5 300.5 Q505.5 300.5 505.5 303.5" fill="none" stroke="#000" stroke-width="1"/>
<path d="M502.5 300.5 V307.5" stroke="#000" stroke-width="1"/>
<rect x="489" y="307.8" width="29" height="29" fill="#B4B4B4" stroke="#303030" stroke-width="1"/>
<circle cx="503.2" cy="321" r="7.3" fill="none" stroke="#202020" stroke-width="1.3"/>
<rect x="500.2" y="311" width="6" height="4" fill="#202020"/><rect x="500.2" y="327" width="6" height="4" fill="#202020"/>
<text x="503.2" y="325" font-family="Liberation Sans" font-size="9" font-weight="normal" text-anchor="middle" letter-spacing="0" fill="#202020" stroke="#202020" stroke-width="0.3">M</text>
<path d="M502.5 337 V345" stroke="#000" stroke-width="1"/>
<path d="M499.5 341 Q499.5 344 502.5 344 Q505.5 344 505.5 341" fill="none" stroke="#000" stroke-width="1"/>
<text x="511" y="307" font-family="Liberation Sans" font-size="9.5" font-weight="normal" text-anchor="start" letter-spacing="0" fill="#000" stroke="#000" stroke-width="0.2">1</text>
<text x="511" y="347" font-family="Liberation Sans" font-size="9.5" font-weight="normal" text-anchor="start" letter-spacing="0" fill="#000" stroke="#000" stroke-width="0.2">2</text>
<text x="517.5" y="325.6" font-family="Liberation Sans" font-size="14.5" font-weight="normal" text-anchor="start" letter-spacing="0" fill="#202020" stroke="#202020" stroke-width="0.15">V</text>
<text x="527.3" y="325.5" font-family="Liberation Sans" font-size="9.2" font-weight="normal" text-anchor="start" letter-spacing="-0.2" fill="#202020" stroke="#202020" stroke-width="0.3">59</text>
<path d="M502.5 344 V352" fill="none" stroke="#000" stroke-width="4" stroke-linecap="butt" stroke-linejoin="miter"/>
<text x="502.7" y="361.3" font-family="Liberation Sans" font-size="9" font-weight="normal" text-anchor="middle" letter-spacing="-0.2" fill="#000" stroke="#000" stroke-width="0.25">0,5</text>
<text x="502.7" y="370.8" font-family="Liberation Sans" font-size="9" font-weight="normal" text-anchor="middle" letter-spacing="-0.2" fill="#000" stroke="#000" stroke-width="0.25">gn/ge</text>
<text x="538.1999999999999" y="361.3" font-family="Liberation Sans" font-size="9" font-weight="normal" text-anchor="middle" letter-spacing="-0.2" fill="#000" stroke="#000" stroke-width="0.25">0,5</text>
<text x="538.1999999999999" y="370.8" font-family="Liberation Sans" font-size="9" font-weight="normal" text-anchor="middle" letter-spacing="-0.2" fill="#000" stroke="#000" stroke-width="0.25">gn/ge</text>
<path d="M502.5 376 V382" fill="none" stroke="#000" stroke-width="4" stroke-linecap="butt" stroke-linejoin="miter"/>
<rect x="498.5" y="382" width="8.5" height="9" fill="#fff" stroke="#404040" stroke-width="0.9"/>
<path d="M500.5 389 Q500.5 384 502.7 384 Q505 384 505 389 M502.7 384 V390" stroke="#404040" stroke-width="0.8" fill="none"/>
<text x="509" y="391" font-family="Liberation Sans" font-size="13" font-weight="normal" text-anchor="start" letter-spacing="0" fill="#303030">T</text>
<text x="516" y="391" font-family="Liberation Sans" font-size="9" font-weight="normal" text-anchor="start" letter-spacing="-0.3" fill="#303030">10t/7</text>
<path d="M562.00 254.00 L552.40 254.00 M548.10 254.00 L538.50 254.00 M540.50 252.00 L540.50 265.00 M540.50 268.33 L540.50 279.33 M540.50 282.67 L540.50 293.67 M540.50 297.00 L540.50 308.00 M540.50 311.33 L540.50 322.33 M540.50 325.67 L540.50 336.67 M540.50 340.00 L540.50 353.00" fill="none" stroke="#000" stroke-width="4" stroke-linecap="butt"/>
<text x="563" y="258" font-family="Liberation Sans" font-size="9.5" font-weight="normal" text-anchor="start" letter-spacing="0" fill="#000" stroke="#000" stroke-width="0.2">x</text>
<path d="M502.5 391 V497" fill="none" stroke="#000" stroke-width="4" stroke-linecap="butt" stroke-linejoin="miter"/>
<text x="510.5" y="426.5" font-family="Liberation Sans" font-size="14" font-weight="normal" text-anchor="start" letter-spacing="1.2" fill="#000">**</text>
<rect x="203.5" y="472" width="17.5" height="10.5" fill="#fff" stroke="#404040" stroke-width="0.9"/>
<text x="212" y="480.5" font-family="Liberation Sans" font-size="10" font-weight="normal" text-anchor="middle" letter-spacing="-0.4" fill="#000" stroke="#000" stroke-width="0.2">198</text>
<path d="M212 482 V497" fill="none" stroke="#000" stroke-width="4" stroke-linecap="butt" stroke-linejoin="miter"/>
<path d="M246.5 497 V481 H283.5 V497" fill="none" stroke="#000" stroke-width="4" stroke-linecap="butt" stroke-linejoin="miter"/>
<text x="618" y="415.5" font-family="Liberation Sans" font-size="9.5" font-weight="normal" text-anchor="start" letter-spacing="-0.2" fill="#202020">w s</text>
<text x="636" y="415.5" font-family="Liberation Sans" font-size="9.5" font-weight="normal" text-anchor="start" letter-spacing="0" fill="#202020">=</text>
<text x="646" y="415.5" font-family="Liberation Sans" font-size="9.5" font-weight="normal" text-anchor="start" letter-spacing="-0.2" fill="#202020">w hite</text>
<text x="618" y="427.7" font-family="Liberation Sans" font-size="9.5" font-weight="normal" text-anchor="start" letter-spacing="-0.2" fill="#202020">sw</text>
<text x="636" y="427.7" font-family="Liberation Sans" font-size="9.5" font-weight="normal" text-anchor="start" letter-spacing="0" fill="#202020">=</text>
<text x="646" y="427.7" font-family="Liberation Sans" font-size="9.5" font-weight="normal" text-anchor="start" letter-spacing="-0.2" fill="#202020">black</text>
<text x="618" y="439.9" font-family="Liberation Sans" font-size="9.5" font-weight="normal" text-anchor="start" letter-spacing="-0.2" fill="#202020">ro</text>
<text x="636" y="439.9" font-family="Liberation Sans" font-size="9.5" font-weight="normal" text-anchor="start" letter-spacing="0" fill="#202020">=</text>
<text x="646" y="439.9" font-family="Liberation Sans" font-size="9.5" font-weight="normal" text-anchor="start" letter-spacing="-0.2" fill="#202020">red</text>
<text x="618" y="452.1" font-family="Liberation Sans" font-size="9.5" font-weight="normal" text-anchor="start" letter-spacing="-0.2" fill="#202020">br</text>
<text x="636" y="452.1" font-family="Liberation Sans" font-size="9.5" font-weight="normal" text-anchor="start" letter-spacing="0" fill="#202020">=</text>
<text x="646" y="452.1" font-family="Liberation Sans" font-size="9.5" font-weight="normal" text-anchor="start" letter-spacing="-0.2" fill="#202020">brow n</text>
<text x="618" y="464.3" font-family="Liberation Sans" font-size="9.5" font-weight="normal" text-anchor="start" letter-spacing="-0.2" fill="#202020">gn</text>
<text x="636" y="464.3" font-family="Liberation Sans" font-size="9.5" font-weight="normal" text-anchor="start" letter-spacing="0" fill="#202020">=</text>
<text x="646" y="464.3" font-family="Liberation Sans" font-size="9.5" font-weight="normal" text-anchor="start" letter-spacing="-0.2" fill="#202020">green</text>
<text x="618" y="476.5" font-family="Liberation Sans" font-size="9.5" font-weight="normal" text-anchor="start" letter-spacing="-0.2" fill="#202020">bl</text>
<text x="636" y="476.5" font-family="Liberation Sans" font-size="9.5" font-weight="normal" text-anchor="start" letter-spacing="0" fill="#202020">=</text>
<text x="646" y="476.5" font-family="Liberation Sans" font-size="9.5" font-weight="normal" text-anchor="start" letter-spacing="-0.2" fill="#202020">blue</text>
<text x="618" y="488.7" font-family="Liberation Sans" font-size="9.5" font-weight="normal" text-anchor="start" letter-spacing="-0.2" fill="#202020">gr</text>
<text x="636" y="488.7" font-family="Liberation Sans" font-size="9.5" font-weight="normal" text-anchor="start" letter-spacing="0" fill="#202020">=</text>
<text x="646" y="488.7" font-family="Liberation Sans" font-size="9.5" font-weight="normal" text-anchor="start" letter-spacing="-0.2" fill="#202020">grey</text>
<text x="618" y="500.9" font-family="Liberation Sans" font-size="9.5" font-weight="normal" text-anchor="start" letter-spacing="-0.2" fill="#202020">li</text>
<text x="636" y="500.9" font-family="Liberation Sans" font-size="9.5" font-weight="normal" text-anchor="start" letter-spacing="0" fill="#202020">=</text>
<text x="646" y="500.9" font-family="Liberation Sans" font-size="9.5" font-weight="normal" text-anchor="start" letter-spacing="-0.2" fill="#202020">purple</text>
<polygon transform="translate(644.5 146.5) rotate(0)" points="-8.5,4 0,-4.5 8.5,4 5.67,6.83 0,1.16 -5.67,6.83" fill="#A8A8D0" stroke="#4A4A70" stroke-width="1" stroke-linejoin="miter"/>
<polygon transform="translate(644.5 194.5) rotate(180)" points="-8.5,4 0,-4.5 8.5,4 5.67,6.83 0,1.16 -5.67,6.83" fill="#A8A8D0" stroke="#4A4A70" stroke-width="1" stroke-linejoin="miter"/>
<polygon transform="translate(620.5 171) rotate(-90)" points="-8.5,4 0,-4.5 8.5,4 5.67,6.83 0,1.16 -5.67,6.83" fill="#A8A8D0" stroke="#4A4A70" stroke-width="1" stroke-linejoin="miter"/>
<polygon transform="translate(668.5 171) rotate(90)" points="-8.5,4 0,-4.5 8.5,4 5.67,6.83 0,1.16 -5.67,6.83" fill="#A8A8D0" stroke="#4A4A70" stroke-width="1" stroke-linejoin="miter"/>
<path d="M646 239 L652 245" stroke="#C08040" stroke-width="2.6" stroke-linecap="round"/>
<circle cx="642" cy="235" r="5.5" fill="#B8B8E0" stroke="#505080" stroke-width="1"/>
<path d="M646 262 L652 268" stroke="#C08040" stroke-width="2.6" stroke-linecap="round"/>
<circle cx="642" cy="258" r="5.5" fill="#B8B8E0" stroke="#505080" stroke-width="1"/>
<path d="M639 258 H645 M642 255 V261" stroke="#303060" stroke-width="1.2"/>
<path d="M646 284 L652 290" stroke="#C08040" stroke-width="2.6" stroke-linecap="round"/>
<circle cx="642" cy="280" r="5.5" fill="#B8B8E0" stroke="#505080" stroke-width="1"/>
<path d="M639 280 H645" stroke="#303060" stroke-width="1.2"/></g></svg>
<div class="a" style="left:697px;top:197px;width:41px;height:29px;background:#6496F8"></div>
<div class="a lg" style="left:747px;top:96.1px;">switch</div>
<div class="a lg" style="left:697px;top:111.3px;">T10s</div>
<div class="a lg" style="left:739px;top:111.3px;">-</div>
<div class="a lg" style="left:747px;top:111.3px;">10-pin connector, pink,</div>
<div class="a lg" style="left:747px;top:125.3px;">left A-pillar coupling</div>
<div class="a lg" style="left:747px;top:139.4px;">station</div>
<div class="a lg" style="left:697px;top:154.3px;">T10t</div>
<div class="a lg" style="left:739px;top:154.3px;">-</div>
<div class="a lg" style="left:747px;top:154.3px;">10-pin connector, red,</div>
<div class="a lg" style="left:747px;top:168.3px;">left A-pillar coupling</div>
<div class="a lg" style="left:747px;top:182.1px;">station</div>
<div class="a lg" style="left:697px;top:197.0px;font-weight:bold;">V11</div>
<div class="a lg" style="left:739px;top:197.0px;">-</div>
<div class="a lg" style="left:747px;top:197.0px;">Headlight washer</div>
<div class="a lg" style="left:747px;top:211.3px;">system pump</div>
<div class="a lg" style="left:697px;top:225.7px;">V59</div>
<div class="a lg" style="left:739px;top:225.7px;">-</div>
<div class="a lg" style="left:747px;top:225.7px;">Windscreen and rear</div>
<div class="a lg" style="left:747px;top:240.1px;">window washer pump</div>
<div class="a" style="left:696px;top:255.2px;width:28px;height:28px;border:1.6px solid #101010;border-radius:50%;background:#fff"></div>
<div class="a" style="left:696px;top:262.7px;width:28px;text-align:center;font-size:10.5px;white-space:nowrap;letter-spacing:-0.2px;color:#202020">28</div>
<div class="a lg" style="left:739px;top:255.2px;">-</div>
<div class="a lg" style="left:747px;top:255.2px;">Earth point, on left on</div>
<div class="a lg" style="left:747px;top:269.5px;">plenum chamber</div>
<div class="a" style="left:696px;top:286.1px;width:28px;height:28px;border:1.6px solid #101010;border-radius:50%;background:#fff"></div>
<div class="a" style="left:696px;top:293.6px;width:28px;text-align:center;font-size:10.5px;white-space:nowrap;letter-spacing:-0.2px;color:#202020">81</div>
<div class="a lg" style="left:739px;top:286.1px;">-</div>
<div class="a lg" style="left:747px;top:286.1px;">Earth connection 1, in</div>
<div class="a lg" style="left:747px;top:299.7px;">dash panel wiring</div>
<div class="a lg" style="left:747px;top:313.5px;">harness</div>
<div class="a" style="left:696px;top:329.5px;width:28px;height:28px;border:1.6px solid #101010;border-radius:50%;background:#fff"></div>
<div class="a" style="left:704.5px;top:337.0px;font-size:10.5px;white-space:nowrap;letter-spacing:-0.3px;color:#202020">135</div>
<div class="a lg" style="left:739px;top:329.5px;">-</div>
<div class="a lg" style="left:747px;top:329.5px;">Earth connection 2, in</div>
<div class="a lg" style="left:747px;top:343.1px;">dash panel wiring</div>
<div class="a lg" style="left:747px;top:356.9px;">harness</div>
<div class="a" style="left:696px;top:372.5px;width:28px;height:28px;border:1.6px solid #101010;border-radius:50%;background:#fff"></div>
<div class="a" style="left:704.5px;top:380.0px;font-size:10.5px;white-space:nowrap;letter-spacing:-0.3px;color:#202020">A156</div>
<div class="a lg" style="left:739px;top:372.7px;">-</div>
<div class="a lg" style="left:747px;top:372.7px;">Connection (53c), in</div>
<div class="a lg" style="left:747px;top:386.5px;">dash panel wiring</div>
<div class="a lg" style="left:747px;top:400.5px;">harness</div>
<div class="a lg" style="left:697px;top:415.1px;">*</div>
<div class="a lg" style="left:739px;top:415.1px;">-</div>
<div class="a lg" style="left:747px;top:415.1px;">Only models with</div>
<div class="a lg" style="left:747px;top:429.5px;">headlight washer system</div>
<div class="a lg" style="left:697px;top:444.5px;">**</div>
<div class="a lg" style="left:739px;top:444.5px;">-</div>
<div class="a lg" style="left:747px;top:444.5px;">&nbsp;Only saloon</div>
<div class="a lg" style="left:697px;top:459.5px;">---</div>
<div class="a lg" style="left:739px;top:459.5px;">-</div>
<div class="a lg" style="left:747px;top:459.5px;">&nbsp;Only Variant</div>
<div class="a" style="left:884px;top:93px;width:14px;height:403px;background-color:#E8E6E2;background-image:repeating-conic-gradient(#D4D0C8 0 25%,#fff 0 50%);background-size:2px 2px"></div>
<div class="a" style="left:884px;top:93px;width:14px;height:14px;background:#D4D0C8;box-shadow:inset -1px -1px #404040,inset 1px 1px #fff,inset -2px -2px #808080"><svg class="a" style="left:3px;top:5px" width="8" height="4"><path d="M0 4 L7 4 L3.5 0Z" fill="#000"/></svg></div>
<div class="a" style="left:884px;top:482px;width:14px;height:14px;background:#D4D0C8;box-shadow:inset -1px -1px #404040,inset 1px 1px #fff,inset -2px -2px #808080"><svg class="a" style="left:3px;top:5px" width="8" height="4"><path d="M0 0 L7 0 L3.5 4Z" fill="#000"/></svg></div>
<div class="a" style="left:884px;top:397px;width:14px;height:12px;background:#D4D0C8;box-shadow:inset -1px -1px #404040,inset 1px 1px #fff,inset -2px -2px #808080"></div>
<div class="a" style="left:834px;top:93px;width:1px;height:4px;background:#000"></div>
<div class="a" style="left:0;top:496px;width:900px;height:14px;background:#D4D0C8"></div>
<div class="a" style="left:2px;top:496px;width:13px;height:13px;background:#D4D0C8;box-shadow:inset -1px -1px #404040,inset 1px 1px #fff,inset -2px -2px #808080"><svg class="a" style="left:4px;top:3px" width="5" height="7"><path d="M4 0 L0 3.5 L4 7Z" fill="#808080"/></svg></div>
<div class="a" style="left:15px;top:496px;width:14px;height:13px;background:#D4D0C8;box-shadow:inset -1px -1px #404040,inset 1px 1px #fff,inset -2px -2px #808080"><svg class="a" style="left:5px;top:3px" width="5" height="7"><path d="M0 0 L4 3.5 L0 7Z" fill="#808080"/></svg></div>
<svg class="a" style="left:0;top:490px" width="900" height="25" viewBox="0 490 900 25"><path d="M30 496.5 H900" stroke="#404040" stroke-width="1"/><path d="M31 497 L36.5 509 L89 509 L92 497Z" fill="#D4D0C8"/><path d="M31.5 497 L37 509.5 M92 503 L89 509.5" stroke="#000" stroke-width="1" fill="none"/><path d="M89.5 496 L95.5 509.5 L205 509.5 L210.5 496Z" fill="#fff"/><path d="M89.8 496.8 L95.5 509.5 M205 509.5 L210.5 496.5" stroke="#000" stroke-width="1.1" fill="none"/><path d="M0 510.5 H900" stroke="#fff" stroke-width="1"/></svg>
<div class="a" style="left:42px;top:497px;font-size:10.5px;letter-spacing:-0.25px;color:#202020;white-space:nowrap">Overview</div>
<div class="a" style="left:97px;top:497px;font-size:11px;font-weight:bold;letter-spacing:-0.35px;white-space:nowrap">Current flow diagram</div>
<!-- tab bar -->


<!-- status bar -->

<div class="a st" style="left:0;width:205px;box-shadow:none;letter-spacing:-0.8px;padding-left:2px">Done</div>
<div class="a st" style="left:207px;width:70px">9000000628</div>
<div class="a st" style="left:278px;width:133px"></div>
<div class="a st" style="left:413px;width:15px">3</div>
<div class="a st" style="left:429px;width:26px">3B3</div>
<div class="a st" style="left:457px;width:41px">Passat</div>
<div class="a st" style="left:500px;width:27px">AVB</div>
<div class="a st" style="left:530px;width:34px"></div>
<div class="a st" style="left:566px;width:34px"></div>
<div class="a st" style="left:602px;width:80px"></div>
<div class="a st" style="left:684px;width:56px"></div>
<div class="a st" style="left:743px;width:80px"></div>
<div class="a st" style="left:825px;width:43px">FLORIN</div>
<div class="a st" style="left:871px;width:29px"></div>

</body></html>
